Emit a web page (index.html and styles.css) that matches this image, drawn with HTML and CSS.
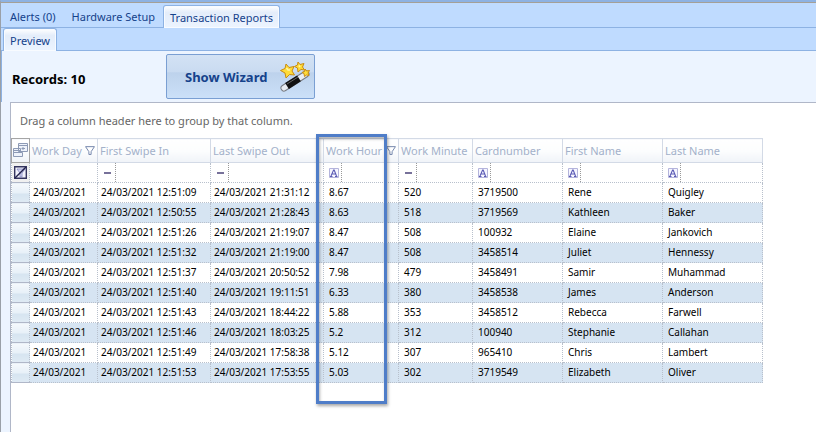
FILE: index.html
```html
<!DOCTYPE html>
<html lang="en">
<head>
<meta charset="utf-8">
<title>Transaction Reports</title>
<link rel="stylesheet" href="styles.css">
</head>
<body>
<svg class="defs" aria-hidden="true">
  <symbol id="funnel" viewBox="0 0 9 9"><path d="M.5 1.500h8L5.500 6v2.500h-2V6z" fill="#fff" stroke="#7587ad" stroke-width=".9"/></symbol>
  <symbol id="letter" viewBox="0 0 10 10"><path d="M.5.5h9v9h-9z" fill="#f6f6ff" stroke="#b4b4dc"/><path d="M2 8 4.600 2h.6L7.500 8M3 6h4M1 8.500h2.500M6 8.500h2.500" fill="none" stroke="#5a5ab4" stroke-width="1.100"/></symbol>
  <symbol id="equals" viewBox="0 0 10 10"><path d="M1 5h7" stroke="#77719a" stroke-width="2"/></symbol>
</svg>
<div class="window">
  <nav class="tabs">
    <button class="tab">Alerts (0)</button>
    <button class="tab">Hardware Setup</button>
    <button class="tab active">Transaction Reports</button>
  </nav>
  <nav class="tabs sub"><button class="tab active">Preview</button></nav>
  <header class="toolbar">
    <strong class="records">Records: 10</strong>
    <button class="wizard"><span>Show Wizard</span>
      <svg width="32" height="32" viewBox="0 0 32 32" aria-hidden="true">
        <path d="M5 27 27 13" stroke="#777b82" stroke-width="7" stroke-linecap="round"/>
        <path d="M5 27 27 13" stroke="#e9edf2" stroke-width="5" stroke-linecap="round"/>
        <path d="M8 25 20 17.400" stroke="#111" stroke-width="7"/>
        <path d="m8 23 11-7" stroke="#666" stroke-width="1"/>
        <g fill="#ffdc38" stroke="#c98c10" stroke-linejoin="round">
          <path d="m7 3 3 3.500 5-1-2 4.500 2.500 4-5-.5-3.500 3.500-1-5L1.500 9.500 6 7.500z"/>
          <path d="m19 1 2 2.500 4-1-1.500 3.500 2 3-3.500-.5-3 2.500-.500-4-3-1.500 3-1.500z"/>
          <path d="m26 8 1.500 2 3-.500-1.500 2.500 1 2.500-2.500-.5-2 1.500-.500-3-2-1 2.500-1z"/>
        </g>
        <path d="m7.500 7 1.500 2h2M20 4.500l1 1.500" fill="none" stroke="#fff6a8" stroke-width="1.500"/>
      </svg>
    </button>
  </header>
  <main class="grid">
    <p class="group-hint">Drag a column header here to group by that column.</p>
    <div class="table-wrap">
      <table>
        <colgroup><col class="c-mark"><col class="c-day"><col class="c-time"><col class="c-time"><col class="c-hour"><col class="c-minute"><col class="c-card"><col class="c-name"><col class="c-name"></colgroup>
        <thead>
          <tr class="head">
            <th class="chooser"><svg width="15" height="15" viewBox="0 0 15 15" aria-label="Choose columns"><g fill="#eef2fa" stroke="#8d9ab5"><path d="M5.500.5h9v8h-9zM.5 5.500h7v4h-7zM.5 9.500h9v4h-9z"/><path d="M6 2.500h8M1 7.500h6M10 7V4M8.500 5.500h3.500" /></g></svg></th>
            <th><div class="label"><span>Work Day</span><svg width="10" height="10"><use href="#funnel"/></svg></div></th>
            <th>First Swipe In</th>
            <th>Last Swipe Out</th>
            <th><div class="label"><span>Work Hour</span><svg width="10" height="10"><use href="#funnel"/></svg></div></th>
            <th>Work Minute</th>
            <th>Cardnumber</th>
            <th>First Name</th>
            <th>Last Name</th>
          </tr>
          <tr class="filters">
            <td class="clear"><svg width="13" height="13" viewBox="0 0 13 13" aria-label="Clear filters"><path d="M.7.7h11.600v11.600H.7z" fill="#f2f2fb" stroke="#35355f" stroke-width="1.400"/><path d="M3 3h8L8 7v4H6V7z" fill="#d5d7f2" stroke="#8486c0" stroke-width=".8"/><path d="M1 12 12 1" stroke="#22224d" stroke-width="1.400"/></svg></td>
            <td><div class="filter"><input aria-label="Filter work day"></div></td>
            <td><div class="filter"><button aria-label="Equals"><svg width="10" height="10"><use href="#equals"/></svg></button><input aria-label="Filter first swipe in"></div></td>
            <td><div class="filter"><button aria-label="Equals"><svg width="10" height="10"><use href="#equals"/></svg></button><input aria-label="Filter last swipe out"></div></td>
            <td><div class="filter"><button aria-label="Contains"><svg width="10" height="10"><use href="#letter"/></svg></button><input aria-label="Filter work hour"></div></td>
            <td><div class="filter"><button aria-label="Equals"><svg width="10" height="10"><use href="#equals"/></svg></button><input aria-label="Filter work minute"></div></td>
            <td><div class="filter"><button aria-label="Contains"><svg width="10" height="10"><use href="#letter"/></svg></button><input aria-label="Filter cardnumber"></div></td>
            <td><div class="filter"><button aria-label="Contains"><svg width="10" height="10"><use href="#letter"/></svg></button><input aria-label="Filter first name"></div></td>
            <td><div class="filter"><button aria-label="Contains"><svg width="10" height="10"><use href="#letter"/></svg></button><input aria-label="Filter last name"></div></td>
          </tr>
        </thead>
        <tbody>
          <tr><td></td><td>24/03/2021</td><td>24/03/2021 12:51:09</td><td>24/03/2021 21:31:12</td><td>8.67</td><td>520</td><td>3719500</td><td>Rene</td><td>Quigley</td></tr>
          <tr><td></td><td>24/03/2021</td><td>24/03/2021 12:50:55</td><td>24/03/2021 21:28:43</td><td>8.63</td><td>518</td><td>3719569</td><td>Kathleen</td><td>Baker</td></tr>
          <tr><td></td><td>24/03/2021</td><td>24/03/2021 12:51:26</td><td>24/03/2021 21:19:07</td><td>8.47</td><td>508</td><td>100932</td><td>Elaine</td><td>Jankovich</td></tr>
          <tr><td></td><td>24/03/2021</td><td>24/03/2021 12:51:32</td><td>24/03/2021 21:19:00</td><td>8.47</td><td>508</td><td>3458514</td><td>Juliet</td><td>Hennessy</td></tr>
          <tr><td></td><td>24/03/2021</td><td>24/03/2021 12:51:37</td><td>24/03/2021 20:50:52</td><td>7.98</td><td>479</td><td>3458491</td><td>Samir</td><td>Muhammad</td></tr>
          <tr><td></td><td>24/03/2021</td><td>24/03/2021 12:51:40</td><td>24/03/2021 19:11:51</td><td>6.33</td><td>380</td><td>3458538</td><td>James</td><td>Anderson</td></tr>
          <tr><td></td><td>24/03/2021</td><td>24/03/2021 12:51:43</td><td>24/03/2021 18:44:22</td><td>5.88</td><td>353</td><td>3458512</td><td>Rebecca</td><td>Farwell</td></tr>
          <tr><td></td><td>24/03/2021</td><td>24/03/2021 12:51:46</td><td>24/03/2021 18:03:25</td><td>5.2</td><td>312</td><td>100940</td><td>Stephanie</td><td>Callahan</td></tr>
          <tr><td></td><td>24/03/2021</td><td>24/03/2021 12:51:49</td><td>24/03/2021 17:58:38</td><td>5.12</td><td>307</td><td>965410</td><td>Chris</td><td>Lambert</td></tr>
          <tr><td></td><td>24/03/2021</td><td>24/03/2021 12:51:53</td><td>24/03/2021 17:53:55</td><td>5.03</td><td>302</td><td>3719549</td><td>Elizabeth</td><td>Oliver</td></tr>
        </tbody>
      </table>
      <div class="highlight"></div>
    </div>
  </main>
</div>
</body>
</html>
```
FILE: styles.css
```css
* { box-sizing: border-box; }
body {
  margin: 0;
  min-height: 100vh;
  display: flex;
  font-family: "Noto Sans", "Open Sans", sans-serif;
  font-size: 11px;
  color: #000;
}
button, input { font: inherit; color: inherit; margin: 0; }
.defs { position: absolute; width: 0; height: 0; }
.window {
  flex: 1;
  min-width: 0;
  display: flex;
  flex-direction: column;
  border-top: 2px solid #8db2e3;
  border-left: 1px solid #9aa0a8;
  background: #ecf4ff;
}
.tabs {
  display: flex;
  align-items: flex-end;
  height: 26px;
  padding-left: 1px;
  border-top: 1px solid #a5a097;
  border-bottom: 1px solid #8db2e3;
  background: #bfdbff;
  color: #15428b;
}
.tabs.sub { height: 23px; border-top: 0; padding-left: 2px; }
.tab {
  height: 22px;
  padding: 0 8px;
  border: 0;
  background: none;
  line-height: 24px;
  white-space: nowrap;
}
.tab.active {
  height: 23px;
  padding: 0 6px;
  margin-bottom: -1px;
  border: 1px solid #8db2e3;
  border-bottom: 0;
  border-radius: 3px 3px 0 0;
  background: linear-gradient(#fff, #e4edfa 30%, #ecf4ff);
  box-shadow: inset 0 0 0 1px #f8fbff;
}
.toolbar {
  display: flex;
  align-items: center;
  height: 51px;
  padding-left: 10px;
  border-left: 1px solid #8db2e3;
}
.records { width: 154px; padding-top: 4px; font-size: 13px; }
.wizard {
  display: flex;
  align-items: center;
  justify-content: space-between;
  width: 149px;
  height: 45px;
  padding: 0 3px 0 18px;
  border: 1px solid #7a9fd3;
  border-radius: 2px;
  background: linear-gradient(#d3e2f4, #c9dbf1 40%, #bdd2ec 41%, #cbe0f8);
  font-size: 13px;
  font-weight: 700;
  color: #15428b;
}
.grid {
  flex: 1;
  margin-left: 9px;
  border-top: 1px solid #b0b7c8;
  border-left: 1px solid #b0b7c8;
  background: #fff;
}
.group-hint {
  margin: 0;
  padding-left: 9px;
  height: 35px;
  line-height: 36px;
  color: #666;
}
.table-wrap { position: relative; width: 752px; }
table { width: 752px; table-layout: fixed; border-collapse: collapse; }
.c-mark { width: 18px; }
.c-day { width: 68px; }
.c-time { width: 113px; }
.c-hour { width: 75px; }
.c-minute { width: 74px; }
.c-card { width: 90px; }
.c-name { width: 100px; }
th, td { padding: 0 0 1px 5px; text-align: left; white-space: nowrap; }
th {
  height: 24px;
  padding-left: 2px;
  border: 1px solid #d3dae6;
  background: linear-gradient(#fff, #fcfdfe 50%, #f0f3f8);
  font-weight: 400;
  color: #a3b1ca;
}
.chooser { padding: 0; border: 1px solid #a5a5a5; }
.label { display: flex; align-items: center; justify-content: space-between; padding-right: 2px; }
th svg, td svg { display: block; flex: none; }
.chooser svg, .clear svg { margin: 0 auto; }
td {
  height: 20px;
  border: 1px dotted #b8c0cc;
  font-size: 10px;
}
tbody td:nth-child(-n+4) { padding-left: 3px; }
tbody tr:nth-child(even) { background: #d6e4f2; }
tbody td:first-child {
  border-top: 1px solid #b0b7c8;
  border-bottom: 1px solid #b0b7c8;
  background: linear-gradient(#f5f9fd, #e7f0f8 50%, #d6e4f0 51%, #dfeaf4);
}
.filters td { padding: 0; }
.filters .clear { background: #f0f0f0; }
.filter { display: flex; height: 19px; }
.filter button {
  display: flex;
  align-items: center;
  width: 18px;
  padding: 1px 0 0 5px;
  border: 0;
  border-right: 1px dotted #999;
  background: none;
}
.filter input { flex: 1; min-width: 0; width: 0; padding: 0; border: 0; background: none; }
.highlight {
  position: absolute;
  top: -4px;
  bottom: -21px;
  left: 305px;
  width: 71px;
  border: 3px solid #4f7dc8;
  box-shadow: 1px 2px 3px rgba(0, 0, 0, .35), inset 1px 2px 3px rgba(0, 0, 0, .3);
  pointer-events: none;
}
```
